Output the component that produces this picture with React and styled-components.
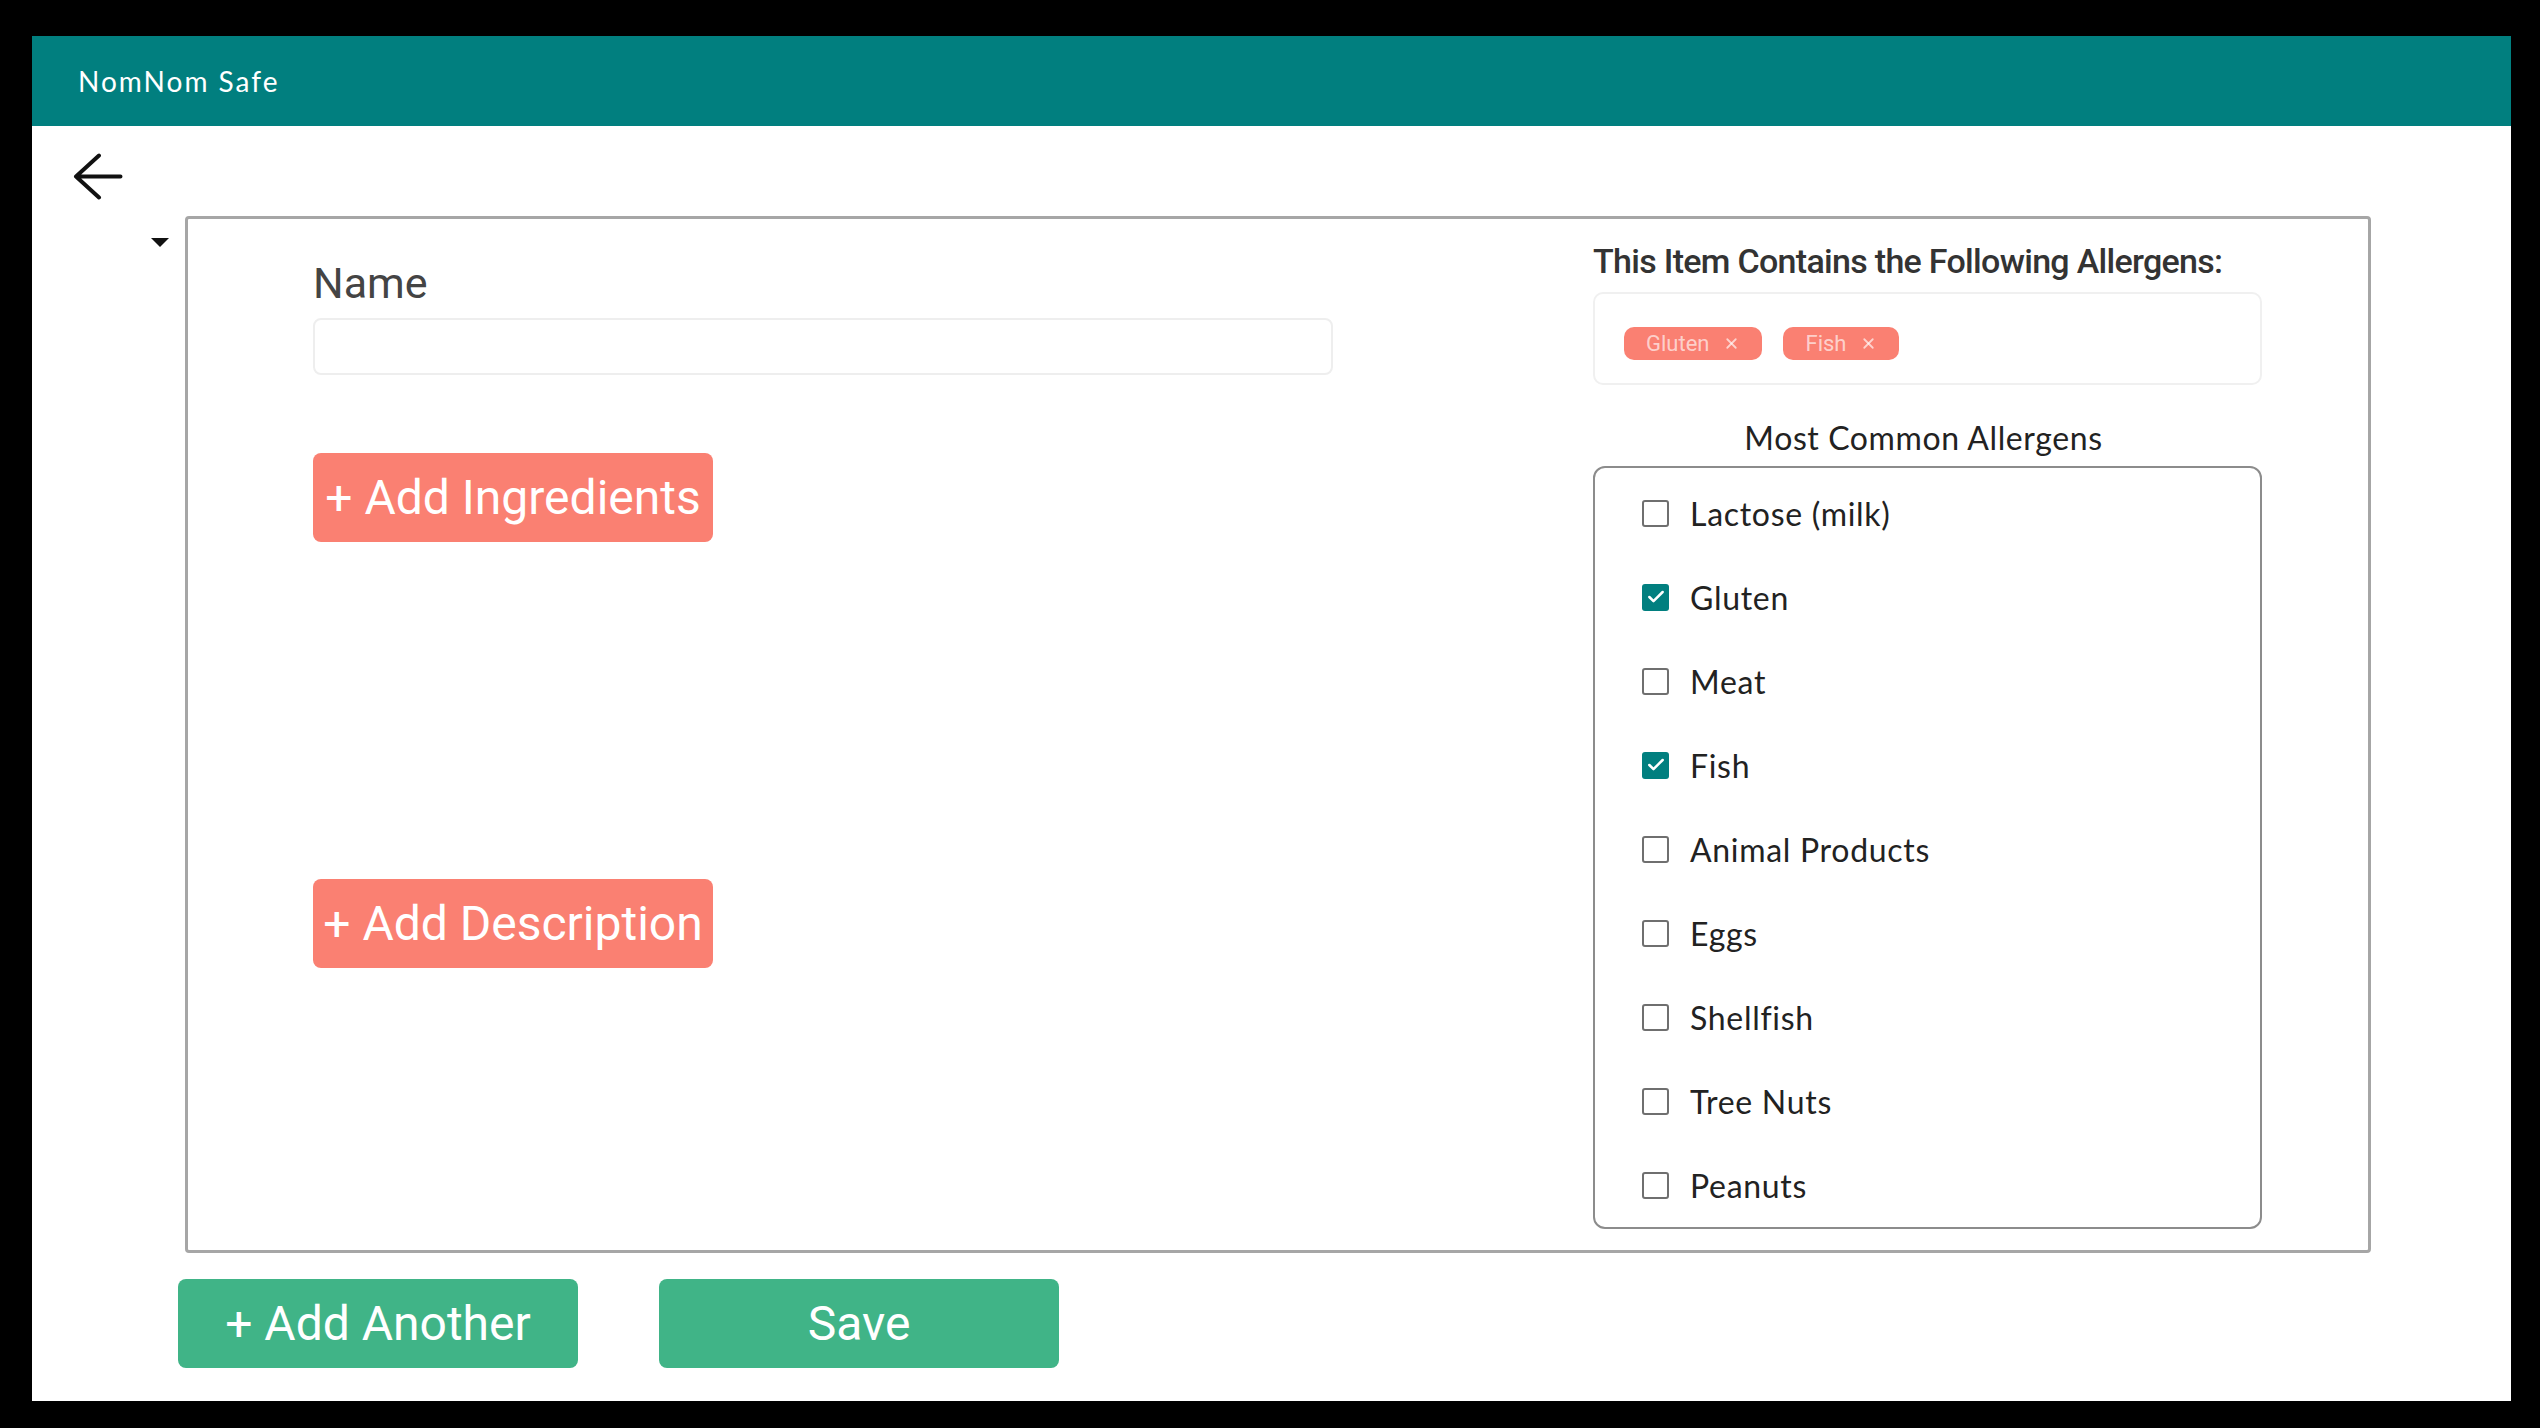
import React, { useState } from "react";
import styled, { createGlobalStyle } from "styled-components";
import { Check, X } from "lucide-react";

const GlobalStyle = createGlobalStyle`
  * {
    box-sizing: border-box;
  }
  body {
    margin: 0;
    background: #000;
    padding: 36px 29px 27px 32px;
    font-family: Roboto, "Liberation Sans", sans-serif;
  }
`;

const Frame = styled.div`
  height: 1365px;
  background: #fff;
  display: flex;
  flex-direction: column;
`;

const Header = styled.header`
  height: 90px;
  background: #017f7f;
  display: flex;
  align-items: center;
  padding-left: 46px;
  color: #fff;
  font-family: Lato, "Open Sans", sans-serif;
  font-size: 28px;
  letter-spacing: 2px;
`;

const Body = styled.main`
  padding: 27px 0 0 41px;
  display: flex;
  flex-direction: column;
`;

const BackButton = styled.button`
  width: 50px;
  height: 47px;
  padding: 0;
  border: none;
  background: none;
  cursor: pointer;
  display: flex;
`;

const Row = styled.div`
  display: flex;
  align-items: flex-start;
  margin-top: 16px;
`;

const Caret = styled.div`
  width: 0;
  height: 0;
  margin: 22px 16px 0 78px;
  border-left: 9px solid transparent;
  border-right: 9px solid transparent;
  border-top: 9px solid #111;
`;

const Card = styled.section`
  width: 2186px;
  border: 3px solid #a6a6a6;
  border-radius: 4px;
  padding: 22px 106px 21px 125px;
  display: grid;
  grid-template-columns: 1020px 669px;
  justify-content: space-between;
`;

const LeftColumn = styled.div`
  display: flex;
  flex-direction: column;
  align-items: flex-start;
  padding-top: 17px;
`;

const Label = styled.label`
  font-size: 43px;
  line-height: 50px;
  color: #444;
`;

const TextInput = styled.input`
  width: 1020px;
  height: 57px;
  margin-top: 10px;
  border: 2px solid #eee;
  border-radius: 8px;
  outline: none;
  font-size: 28px;
  padding: 0 16px;
`;

const Button = styled.button`
  width: 400px;
  height: 89px;
  margin-top: ${(p) => p.$top || 0}px;
  border: none;
  border-radius: 8px;
  background: ${(p) => p.$bg};
  color: #fff;
  font-family: Roboto, "Liberation Sans", sans-serif;
  font-size: 48px;
  cursor: pointer;
  padding: 0;
`;

const RightColumn = styled.div`
  display: flex;
  flex-direction: column;
`;

const Title = styled.h2`
  margin: 0;
  font-size: 34px;
  line-height: 40px;
  font-weight: 500;
  color: #333;
  letter-spacing: -0.7px;
`;

const TagBox = styled.div`
  height: 93px;
  margin-top: 11px;
  border: 2px solid #f0f0f0;
  border-radius: 10px;
  display: flex;
  align-items: center;
  gap: 21px;
  padding: 10px 29px 0;
`;

const Tag = styled.span`
  height: 33px;
  display: inline-flex;
  align-items: center;
  gap: 14px;
  padding: 0 22px 0 22px;
  border-radius: 10px;
  background: #fa8072;
  color: rgba(255, 255, 255, 0.65);
  font-size: 22px;
`;

const Subtitle = styled.div`
  margin-top: 35px;
  text-align: center;
  font-family: Lato, "Open Sans", sans-serif;
  font-size: 32px;
  line-height: 36px;
  letter-spacing: 0.6px;
  color: #222;
  padding-right: 8px;
`;

const List = styled.div`
  margin-top: 10px;
  border: 2px solid #8c8c8c;
  border-radius: 12px;
  padding: 3px 0 0 47px;
  display: flex;
  flex-direction: column;
`;

const Option = styled.label`
  height: 84px;
  display: flex;
  align-items: center;
  gap: 21px;
  font-family: Lato, "Open Sans", sans-serif;
  font-size: 32px;
  letter-spacing: 0.7px;
  color: #222;
  cursor: pointer;
`;

const Box = styled.span`
  width: 27px;
  height: 27px;
  border-radius: 3px;
  border: ${(p) => (p.$checked ? "none" : "2px solid #6f6f6f")};
  background: ${(p) => (p.$checked ? "#017f7f" : "#fff")};
  display: flex;
  align-items: center;
  justify-content: center;
`;

const Actions = styled.div`
  display: flex;
  gap: 81px;
  margin: 26px 0 0 105px;
`;

const allergens = [
  "Lactose (milk)",
  "Gluten",
  "Meat",
  "Fish",
  "Animal Products",
  "Eggs",
  "Shellfish",
  "Tree Nuts",
  "Peanuts",
];

function BackArrow() {
  return (
    <svg width="50" height="47" viewBox="0 0 50 47" fill="none">
      <path
        d="M26 2.5 L3 23.5 L26 44.5 M3 23.5 H47.5"
        stroke="#111"
        strokeWidth="4"
        strokeLinecap="round"
        strokeLinejoin="round"
      />
    </svg>
  );
}

export default function App() {
  const [selected, setSelected] = useState(["Gluten", "Fish"]);

  const toggle = (name) =>
    setSelected((s) =>
      s.includes(name) ? s.filter((n) => n !== name) : [...s, name]
    );

  const chosen = allergens.filter((a) => selected.includes(a));

  return (
    <>
      <GlobalStyle />
      <Frame>
        <Header>NomNom Safe</Header>
        <Body>
          <BackButton aria-label="Back">
            <BackArrow />
          </BackButton>
          <Row>
            <Caret />
            <Card>
              <LeftColumn>
                <Label>Name</Label>
                <TextInput />
                <Button $bg="#fa8072" $top={78}>
                  + Add Ingredients
                </Button>
                <Button $bg="#fa8072" $top={337}>
                  + Add Description
                </Button>
              </LeftColumn>
              <RightColumn>
                <Title>This Item Contains the Following Allergens:</Title>
                <TagBox>
                  {chosen.map((a) => (
                    <Tag key={a}>
                      {a}
                      <X size={17} strokeWidth={2.5} />
                    </Tag>
                  ))}
                </TagBox>
                <Subtitle>Most Common Allergens</Subtitle>
                <List>
                  {allergens.map((a) => {
                    const on = selected.includes(a);
                    return (
                      <Option key={a} onClick={() => toggle(a)}>
                        <Box $checked={on}>
                          {on && <Check size={20} color="#fff" strokeWidth={3} />}
                        </Box>
                        {a}
                      </Option>
                    );
                  })}
                </List>
              </RightColumn>
            </Card>
          </Row>
          <Actions>
            <Button $bg="#40b487">+ Add Another</Button>
            <Button $bg="#40b487">Save</Button>
          </Actions>
        </Body>
      </Frame>
    </>
  );
}
